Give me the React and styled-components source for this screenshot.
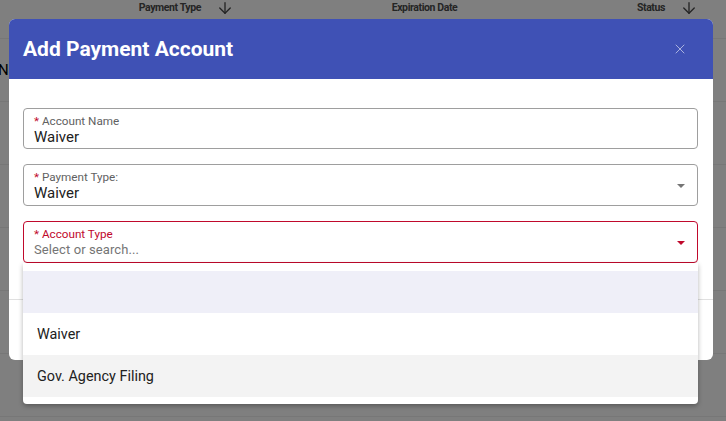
import React from "react";
import styled, { createGlobalStyle } from "styled-components";
import { ArrowDown, X } from "lucide-react";

const GlobalStyle = createGlobalStyle`
  body {
    margin: 0;
    font-family: Roboto, "Liberation Sans", sans-serif;
    background: #fff;
  }
`;

const Page = styled.div`
  position: relative;
  width: 726px;
  height: 421px;
  overflow: hidden;
`;

const Table = styled.div`
  display: flex;
  flex-direction: column;
`;

const HeadRow = styled.div`
  display: flex;
  height: 39px;
  box-sizing: border-box;
  border-bottom: 1px solid #eee;
`;

const HeadCell = styled.div`
  width: ${(p) => p.$w}px;
  display: flex;
  justify-content: ${(p) => p.$justify || "flex-start"};
  align-items: flex-start;
  gap: 15px;
  padding-right: ${(p) => p.$pr || 0}px;
  box-sizing: border-box;
  font-size: 10.5px;
  font-weight: 700;
  letter-spacing: -0.4px;
  line-height: 16px;
  color: #4a4a4a;

  svg {
    margin-top: -1px;
  }
`;

const Row = styled.div`
  height: 63px;
  border-bottom: 1px solid #eee;
  box-sizing: border-box;
  display: flex;
  align-items: center;
  font-size: 15px;
  color: #000;
  margin-left: -2px;
`;

const Overlay = styled.div`
  position: absolute;
  inset: 0;
  background: rgba(0, 0, 0, 0.5);
`;

const Modal = styled.div`
  position: absolute;
  left: 9px;
  top: 19px;
  width: 704px;
  background: #fff;
  border-radius: 6px;
  display: flex;
  flex-direction: column;
`;

const ModalHeader = styled.div`
  height: 60px;
  background: #3f51b5;
  border-radius: 6px 6px 0 0;
  display: flex;
  align-items: center;
  justify-content: space-between;
  padding: 0 25px 0 14px;
`;

const Title = styled.h2`
  margin: 0;
  font-size: 21px;
  font-weight: 700;
  color: #fff;
`;

const CloseButton = styled.button`
  border: none;
  background: none;
  padding: 0;
  display: flex;
  color: rgba(255, 255, 255, 0.6);
`;

const Body = styled.div`
  display: flex;
  flex-direction: column;
  gap: 15px;
  padding: 29px 15px 36px 14px;
`;

const FieldWrap = styled.div`
  position: relative;
`;

const Field = styled.div`
  height: ${(p) => p.$h || 42}px;
  box-sizing: border-box;
  border: 1px solid ${(p) => (p.$error ? "#c0092c" : "#9e9e9e")};
  border-radius: 4px;
  padding: 5px 10px 3px;
  display: flex;
  align-items: center;
`;

const FieldText = styled.div`
  flex: 1;
  display: flex;
  flex-direction: column;
`;

const Label = styled.div`
  font-size: 11.7px;
  line-height: 14px;
  color: ${(p) => (p.$error ? "#c0092c" : "#616161")};
`;

const Star = styled.span`
  color: #c0092c;
`;

const Value = styled.div`
  line-height: 18px;
  color: ${(p) => (p.$placeholder ? "#757575" : "#212121")};
  font-size: ${(p) => (p.$placeholder ? "13px" : "15px")};
  letter-spacing: ${(p) => (p.$placeholder ? "0.1px" : "0")};
`;

const Caret = styled.span`
  width: 0;
  height: 0;
  margin-right: 2px;
  border-left: 4.5px solid transparent;
  border-right: 4.5px solid transparent;
  border-top: 4.5px solid ${(p) => (p.$error ? "#c0092c" : "#757575")};
`;

const Footer = styled.div`
  height: 60px;
  border-top: 1px solid #e0e0e0;
`;

const Menu = styled.ul`
  position: absolute;
  top: 100%;
  left: 0;
  right: 0;
  margin: 0;
  padding: 8px 0 7px;
  list-style: none;
  background: #fff;
  border-radius: 0 0 4px 4px;
  box-shadow: 0 2px 5px rgba(0, 0, 0, 0.3);
  z-index: 2;
`;

const Option = styled.li`
  height: 42px;
  display: flex;
  align-items: center;
  padding: 0 14px;
  font-size: 14.4px;
  color: #212121;
  background: ${(p) => p.$bg || "#fff"};
`;

const options = [
  { label: "", bg: "#efeff8" },
  { label: "Waiver" },
  { label: "Gov. Agency Filing", bg: "#f3f3f3" },
];

export default function App() {
  return (
    <Page>
      <GlobalStyle />
      <Table>
        <HeadRow>
          <HeadCell $w={236} $justify="flex-end" $pr={2}>
            Payment Type
            <ArrowDown size={18} strokeWidth={1.8} />
          </HeadCell>
          <HeadCell $w={377} $justify="center">
            Expiration Date
          </HeadCell>
          <HeadCell $w={88} $justify="flex-end" $pr={3}>
            Status
            <ArrowDown size={18} strokeWidth={1.8} />
          </HeadCell>
        </HeadRow>
        <Row>None</Row>
        <Row />
        <Row />
        <Row />
        <Row />
        <Row />
      </Table>
      <Overlay />
      <Modal>
        <ModalHeader>
          <Title>Add Payment Account</Title>
          <CloseButton>
            <X size={16} strokeWidth={1.4} />
          </CloseButton>
        </ModalHeader>
        <Body>
          <Field $h={41}>
            <FieldText>
              <Label>
                <Star>*</Star> Account Name
              </Label>
              <Value>Waiver</Value>
            </FieldText>
          </Field>
          <Field>
            <FieldText>
              <Label>
                <Star>*</Star> Payment Type:
              </Label>
              <Value>Waiver</Value>
            </FieldText>
            <Caret />
          </Field>
          <FieldWrap>
            <Field $error>
              <FieldText>
                <Label $error>
                  <Star>*</Star> Account Type
                </Label>
                <Value $placeholder>Select or search...</Value>
              </FieldText>
              <Caret $error />
            </Field>
            <Menu>
              {options.map((o, i) => (
                <Option key={i} $bg={o.bg}>
                  {o.label}
                </Option>
              ))}
            </Menu>
          </FieldWrap>
        </Body>
        <Footer />
      </Modal>
    </Page>
  );
}
